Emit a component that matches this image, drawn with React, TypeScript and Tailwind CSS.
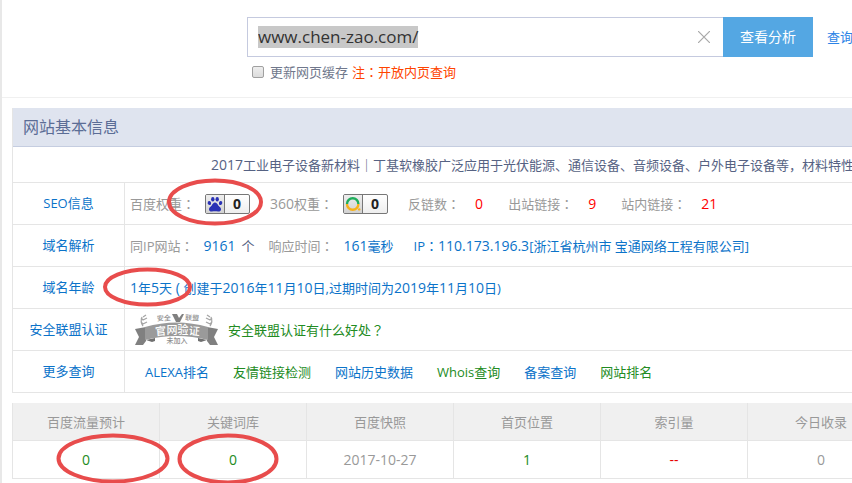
import cn from "clsx";
import type React from "react";
import { useEffect, useRef, useState } from "react";

const MORE_LINKS = [
	{ label: "ALEXA排名", green: false },
	{ label: "友情链接检测", green: true },
	{ label: "网站历史数据", green: false },
	{ label: "Whois查询", green: true },
	{ label: "备案查询", green: false },
	{ label: "网站排名", green: true },
];

const STATS = [
	{ name: "百度流量预计", value: "0", color: "text-[#228b22]" },
	{ name: "关键词库", value: "0", color: "text-[#228b22]" },
	{ name: "百度快照", value: "2017-10-27", color: "text-[#999999]" },
	{ name: "首页位置", value: "1", color: "text-[#228b22]" },
	{ name: "索引量", value: "--", color: "text-[#e60000]" },
	{ name: "今日收录", value: "0", color: "text-[#999999]" },
];

const Num: React.FC<{ children: React.ReactNode }> = ({ children }) => (
	<span className="text-[14px]">{children}</span>
);

// The JP face centres the full-width colon in its box.
const Colon = () => (
	<span className="font-['Noto_Sans_CJK_JP',sans-serif]">：</span>
);

const Field: React.FC<{
	label: React.ReactNode;
	children: React.ReactNode;
}> = ({ label, children }) => (
	<span className="flex items-center gap-2.5">
		<span className="text-[#999999]">
			{label}
			<Colon />
		</span>
		{children}
	</span>
);

const Row: React.FC<{ title: string; children: React.ReactNode }> = ({
	title,
	children,
}) => (
	<tr>
		<th
			scope="row"
			className="h-[42px] w-[112px] border-r border-b border-[#e5e5e5] pb-0.5 text-center font-normal text-[#0b73c9]"
		>
			{title}
		</th>
		<td className="border-b border-[#e5e5e5] pl-[5px]">{children}</td>
	</tr>
);

const RankBadge: React.FC<{ icon: React.ReactNode; value: number }> = ({
	icon,
	value,
}) => (
	<span className="flex h-5 w-[45px] overflow-hidden rounded-xs border border-[#777777] bg-linear-to-b from-white to-[#eeeeee]">
		<span className="flex w-[19px] items-center justify-center border-r border-[#777777] bg-linear-to-b from-[#eeeeee] to-[#d2d2d2]">
			{icon}
		</span>
		<span className="flex-1 text-center text-[14px] leading-[18px] font-bold text-[#222222]">
			{value}
		</span>
	</span>
);

const PawIcon = () => (
	<svg viewBox="0 0 16 16" className="h-4 w-4" fill="#2a32b5">
		<ellipse cx="2.4" cy="7" rx="1.7" ry="2.1" transform="rotate(-12 2.4 7)" />
		<ellipse cx="5.8" cy="3.2" rx="1.7" ry="2.2" />
		<ellipse cx="10.2" cy="3.2" rx="1.7" ry="2.2" />
		<ellipse cx="13.6" cy="7" rx="1.7" ry="2.1" transform="rotate(12 13.6 7)" />
		<path d="M8 6.6c1.7 0 2.3 1.6 3.3 2.8 1.1 1.3 2.9 2.2 2.7 4.1-.2 1.5-1.4 2.2-2.9 2-1.1-.2-2-.3-3.1-.3s-2 .1-3.1.3c-1.5.2-2.7-.5-2.9-2-.2-1.9 1.6-2.8 2.7-4.1 1-1.2 1.6-2.8 3.3-2.8z" />
	</svg>
);

const SoIcon = () => (
	<svg viewBox="0 0 16 16" className="h-4 w-4" fill="none" strokeWidth="2.4">
		<path d="M2 8a5.700 5.700 0 0 1 11.400 0" stroke="#1fae5c" />
		<path d="M2 8a5.700 5.700 0 0 0 11.400 0" stroke="#f7b21b" />
		<circle cx="14.2" cy="13.4" r="1.2" fill="#f7b21b" />
	</svg>
);

const OfficialBadge = () => (
	<svg
		width="83"
		height="32"
		viewBox="0 0 83 32"
		fill="#909090"
		className="overflow-visible font-['Noto_Sans_CJK_SC',sans-serif]"
		aria-hidden="true"
	>
		<path d="M0 15l11-2v14l-3 4H0l4-8z" fill="#808080" />
		<path d="M83 15l-11-2v14l3 4h8l-4-8z" fill="#808080" />
		<path d="M11 26l9-2v3l-3 1zM72 26l-9-2v3l3 1z" fill="#707070" />
		<path d="M10 13Q41.500 4 73 13v13Q41.500 18 10 26z" fill="#9a9a9a" />
		<path d="M37 0h5l2 4 3-4h2l-4 8h-4z" fill="#808080" />
		<g fill="none" stroke="#a5a5a5" strokeWidth="1.300">
			<path d="M11 1L8 3M6 4l2 2M12 4L8 6M6 8l2 2M12 8l-4 2M7 3Q5 8 8 12" />
			<path d="M72 1l3 2M77 4l-2 2M71 4l4 2M77 8l-2 2M71 8l4 2M76 3Q78 8 75 12" />
		</g>
		<g fontSize="7" fontWeight="500">
			<text x="22" y="7" transform="rotate(-3 22 7)">
				安全
			</text>
			<text x="50" y="6" transform="rotate(3 50 6)">
				联盟
			</text>
			<text x="42" y="29" textAnchor="middle">
				未加入
			</text>
		</g>
		<g fontSize="11" fontWeight="500" fill="#ffffff" textAnchor="middle">
			<text x="26" y="21" transform="rotate(-5 26 21)">
				官
			</text>
			<text x="37" y="20">
				网
			</text>
			<text x="48" y="20">
				验
			</text>
			<text x="59" y="21" transform="rotate(5 59 21)">
				证
			</text>
		</g>
	</svg>
);

const Marks = () => (
	<svg
		width="300"
		height="500"
		viewBox="2 0 300 500"
		fill="none"
		stroke="#e84c4c"
		strokeWidth="4"
		className="pointer-events-none absolute top-0 left-0"
		aria-hidden="true"
	>
		<ellipse cx="215" cy="202" rx="46" ry="21.500" />
		<ellipse cx="147.500" cy="287" rx="42.500" ry="17.500" />
		<ellipse cx="113" cy="458.500" rx="54.500" ry="23" />
		<ellipse cx="228" cy="459" rx="48.500" ry="23.500" />
	</svg>
);

const SearchForm = () => {
	const [url, setUrl] = useState("www.chen-zao.com/");
	const inputRef = useRef<HTMLInputElement>(null);

	useEffect(() => {
		inputRef.current?.select();
	}, []);

	return (
		<form
			onSubmit={(e) => e.preventDefault()}
			className="border-b border-[#f0f0f0] pt-[17px] pb-[15px] pl-[245px]"
		>
			<div className="flex h-10 items-center">
				<div className="flex h-full w-[476px] shrink-0 items-center border border-r-0 border-[#c5cadf] px-2.5">
					<input
						ref={inputRef}
						type="text"
						aria-label="网址"
						value={url}
						onChange={(e) => setUrl(e.target.value)}
						className="min-w-0 flex-1 text-[17px] leading-[22px] text-[#333333] caret-transparent outline-none selection:bg-[#c8c8c8] selection:text-[#333333]"
					/>
					<button
						type="button"
						aria-label="清空"
						onClick={() => setUrl("")}
						className="px-[3px]"
					>
						<svg
							viewBox="0 0 12 12"
							className="h-3 w-3"
							stroke="#a8a8a8"
							strokeWidth="1.2"
						>
							<path d="M0 0l12 12M12 0L0 12" />
						</svg>
					</button>
				</div>
				<button
					type="submit"
					className="h-full w-[90px] shrink-0 bg-[#54a7e3] text-[14px] text-white"
				>
					查看分析
				</button>
				<a href="#history" className="ml-3.5 shrink-0 text-[#2b83e6]">
					查询
				</a>
			</div>
			<div className="mt-[5px] flex h-5 items-center gap-1 pl-[5px]">
				<label className="flex items-center gap-1.5 text-[#70788c]">
					<input
						type="checkbox"
						className="h-3 w-3 appearance-none rounded-xs border border-[#a0a0a0] bg-linear-to-b from-[#eeeeee] to-[#dcdcdc] checked:bg-[#54a7e3]"
					/>
					更新网页缓存
				</label>
				<span className="text-[#ff4400]">
					注
					<Colon />
					开放内页查询
				</span>
			</div>
		</form>
	);
};

const App: React.FC = () => (
	<main className="relative min-h-screen overflow-hidden border-l-2 border-[#e8e8e8] bg-white font-['Open_Sans','Noto_Sans_CJK_SC',sans-serif] text-[13px] leading-5 whitespace-nowrap">
		<SearchForm />

		<div className="pt-2.5 pl-2.5">
			<section className="border-l border-[#e5e5e5]">
				<h1 className="h-[39px] border-b border-[#c5cde0] bg-[#dfe4ef] pl-2.5 text-[16px] leading-[38px] text-[#5b6d96]">
					网站基本信息
				</h1>
				<p className="h-9 border-b border-[#e5e5e5] pl-[198px] leading-9 text-[#566283]">
					<Num>2017</Num>
					工业电子设备新材料｜丁基软橡胶广泛应用于光伏能源、通信设备、音频设备、户外电子设备等，材料特性
				</p>
				<table className="w-full table-fixed border-separate border-spacing-0">
					<tbody>
						<Row title="SEO信息">
							<div className="flex items-center gap-5">
								<Field label="百度权重">
									<RankBadge icon={<PawIcon />} value={0} />
								</Field>
								<Field
									label={
										<>
											<Num>360</Num>权重
										</>
									}
								>
									<RankBadge icon={<SoIcon />} value={0} />
								</Field>
								<Field label="反链数">
									<span className="px-[5px] text-[14px] text-[#ff0000]">0</span>
								</Field>
								<Field label="出站链接">
									<span className="px-[5px] text-[14px] text-[#ff0000]">9</span>
								</Field>
								<Field label="站内链接">
									<span className="px-[5px] text-[14px] text-[#ff0000]">21</span>
								</Field>
							</div>
						</Row>
						<Row title="域名解析">
							<div className="flex items-center text-[#0b73c9]">
								<Field label="同IP网站">
									<span>
										<Num>9161</Num>
										<span className="ml-1.5 text-[#566283]">个</span>
									</span>
								</Field>
								<span className="ml-3.5">
									<Field label="响应时间">
										<span>
											<Num>161</Num>毫秒
										</span>
									</Field>
								</span>
								<span className="ml-5">
									IP
									<Colon />
									<Num>110.173.196.3</Num>[浙江省杭州市 宝通网络工程有限公司]
								</span>
							</div>
						</Row>
						<Row title="域名年龄">
							<span className="text-[#0b73c9]">
								<Num>1</Num>年<Num>5</Num>天<Num> ( </Num>创建于
								<Num>2016</Num>年<Num>11</Num>月<Num>10</Num>日,过期时间为
								<Num>2019</Num>年<Num>11</Num>月<Num>10</Num>日)
							</span>
						</Row>
						<Row title="安全联盟认证">
							<a
								href="#cert"
								className="flex items-center gap-2.5 pl-[5px] text-[#228b22]"
							>
								<OfficialBadge />
								<span>
									安全联盟认证有什么好处
									<span className="font-['Noto_Sans_CJK_JP',sans-serif]">
										？
									</span>
								</span>
							</a>
						</Row>
						<Row title="更多查询">
							<nav className="flex gap-6 pl-[15px]">
								{MORE_LINKS.map((link) => (
									<a
										key={link.label}
										href="#more"
										className={cn(
											link.green ? "text-[#228b22]" : "text-[#0b73c9]",
										)}
									>
										{link.label}
									</a>
								))}
							</nav>
						</Row>
					</tbody>
				</table>
			</section>

			<table className="mt-2.5 border-separate border-spacing-0 text-center">
				<thead>
					<tr className="bg-[#f0f0f0] text-[#999999]">
						{STATS.map((stat) => (
							<th
								key={stat.name}
								scope="col"
								className="h-[38px] min-w-[147px] border-b border-l border-[#e5e5e5] font-normal"
							>
								{stat.name}
							</th>
						))}
					</tr>
				</thead>
				<tbody>
					<tr>
						{STATS.map((stat) => (
							<td
								key={stat.name}
								className={cn(
									"h-[38px] border-b border-l border-[#e5e5e5] text-[14px]",
									stat.color,
								)}
							>
								{stat.value}
							</td>
						))}
					</tr>
				</tbody>
			</table>
		</div>
		<Marks />
	</main>
);

export default App;
